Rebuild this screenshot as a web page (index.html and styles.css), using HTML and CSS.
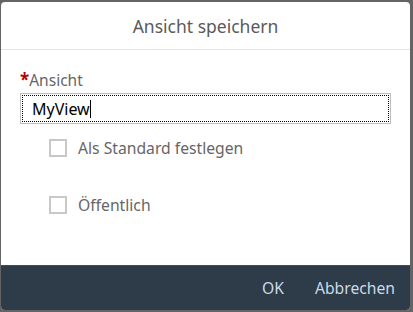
FILE: index.html
```html
<!DOCTYPE html>
<html lang="de">
<head>
<meta charset="utf-8">
<title>Ansicht speichern</title>
<link rel="stylesheet" href="styles.css">
</head>
<body>
<div class="dialog">
  <header class="dialog-header">
    <h1 class="dialog-title">Ansicht speichern</h1>
  </header>
  <section class="dialog-content">
    <label class="field-label" for="view"><span class="required">*</span>Ansicht</label>
    <div class="input-wrap">
      <div class="input" id="view"><span class="input-text">MyView</span><span class="caret"></span></div>
    </div>
    <div class="checks">
      <div class="check-row"><span class="checkbox"></span><span class="check-label">Als Standard festlegen</span></div>
      <div class="check-row"><span class="checkbox"></span><span class="check-label">Öffentlich</span></div>
    </div>
  </section>
  <footer class="dialog-footer">
    <button class="btn">OK</button>
    <button class="btn">Abbrechen</button>
  </footer>
</div>
</body>
</html>
```

FILE: styles.css
```css
html, body {
  margin: 0;
  padding: 0;
  height: 100%;
}
body {
  background: #646464;
  font-family: "Noto Sans", "Liberation Sans", Arial, sans-serif;
  overflow: hidden;
}
.dialog {
  margin: 2px 3px 0 1px;
  height: 308px;
  background: #fff;
  border-radius: 4px;
  display: flex;
  flex-direction: column;
  overflow: hidden;
}
.dialog-header {
  height: 47px;
  border-bottom: 1px solid #e5e5e5;
  display: flex;
  align-items: center;
  justify-content: center;
}
.dialog-title {
  margin: 0;
  font-size: 17.5px;
  font-weight: normal;
  color: #5a5a5a;
}
.dialog-content {
  padding: 20px 19px 0 19px;
  display: flex;
  flex-direction: column;
}
.field-label {
  font-size: 15.5px;
  color: #666;
  line-height: 20px;
  height: 20px;
}
.required {
  color: #bb0000;
  font-weight: bold;
  font-size: 17px;
}
.input-wrap {
  margin-top: 3px;
  border: 1px solid #bfbfbf;
  padding: 1px;
  box-sizing: border-box;
  height: 31px;
}
.input {
  height: 100%;
  box-sizing: border-box;
  border: 1px dotted #000;
  display: flex;
  align-items: center;
  padding-left: 9px;
  font-size: 16px;
  color: #000;
}
.caret {
  display: inline-block;
  width: 1px;
  height: 18px;
  background: #000;
}
.checks {
  display: flex;
  flex-direction: column;
  gap: 39px;
  padding-left: 29px;
  margin-top: 15px;
}
.check-row {
  display: flex;
  align-items: center;
  gap: 11px;
  height: 18px;
}
.checkbox {
  width: 18px;
  height: 18px;
  box-sizing: border-box;
  border: 2px solid #c8c8c8;
}
.check-label {
  font-size: 15.7px;
  color: #666;
}
.dialog-footer {
  margin-top: auto;
  height: 44px;
  background: #2e3b48;
  border-top: 1px solid #3f4e5c;
  display: flex;
  justify-content: flex-end;
  align-items: center;
  padding-right: 15px;
  gap: 31px;
}
.btn {
  background: none;
  border: none;
  padding: 0;
  font-family: inherit;
  font-size: 15.7px;
  color: #c9daea;
}
```
